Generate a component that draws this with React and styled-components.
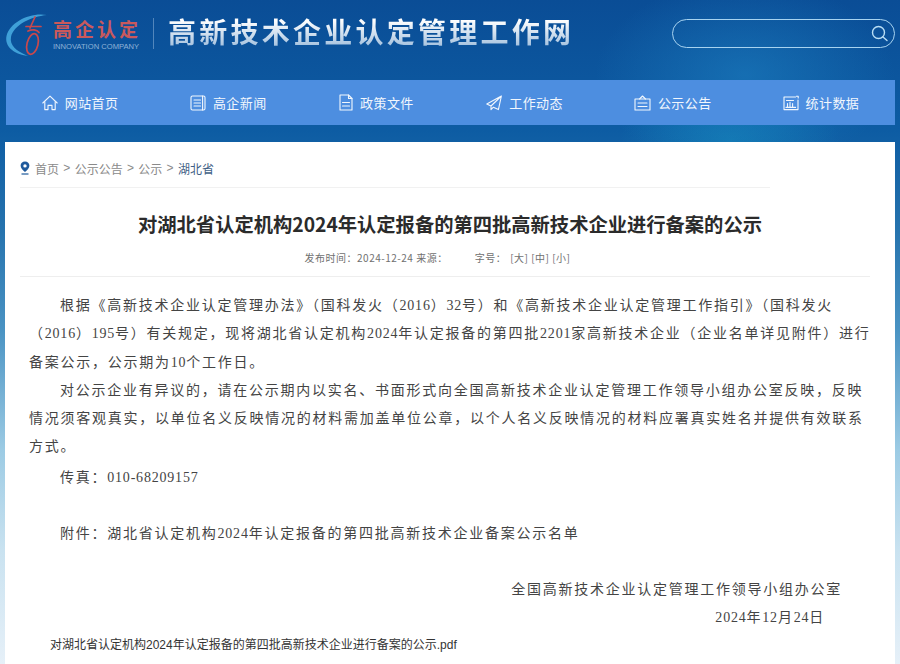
import styled, { createGlobalStyle } from "styled-components";

const GlobalStyle = createGlobalStyle`
  html, body {
    margin: 0;
    padding: 0;
    overflow: hidden;
  }
  * {
    box-sizing: border-box;
  }
`;

const SANS = `"Noto Sans CJK SC", "Liberation Sans", sans-serif`;
const BODY = `"Liberation Serif", "Noto Sans CJK SC", serif`;

const Page = styled.div`
  width: 900px;
  height: 664px;
  overflow: hidden;
  display: flex;
  flex-direction: column;
  font-family: ${SANS};
  background:
    radial-gradient(ellipse 150px 95px at 745px 75px, rgba(30, 130, 195, 0.55), rgba(30, 130, 195, 0) 100%),
    radial-gradient(ellipse 110px 60px at 730px 140px, rgba(20, 140, 190, 0.55), rgba(20, 140, 190, 0) 100%),
    linear-gradient(180deg, #0a4d96 0px, #0d5ca3 130px, #2673ae 230px, #4a93c3 330px, #9ccbe4 450px, #c9e2f0 550px, #e6f0f8 664px);
`;

const Header = styled.header`
  height: 80px;
  flex: none;
  display: flex;
  align-items: flex-start;
  padding: 11px 5px 0 4px;
`;

const Logo = styled.div`
  display: flex;
  align-items: flex-start;
  width: 149px;
  height: 46px;
`;

const LogoText = styled.div`
  display: flex;
  flex-direction: column;
  margin-left: 3px;
  padding-top: 7px;
`;

const LogoName = styled.div`
  font-size: 19px;
  line-height: 22px;
  font-weight: 700;
  letter-spacing: 3px;
  color: #c9595c;
  white-space: nowrap;
`;

const LogoSub = styled.div`
  font-family: "Liberation Sans", sans-serif;
  font-size: 7.6px;
  line-height: 9px;
  margin-top: 2px;
  color: #8fb4d8;
  white-space: nowrap;
`;

const Separator = styled.div`
  width: 1px;
  height: 31px;
  margin: 7px 0 0 0;
  background: rgba(190, 215, 240, 0.4);
`;

const SiteTitle = styled.h1`
  margin: 2px 0 0 14px;
  font-size: 28px;
  line-height: 36px;
  font-weight: 700;
  letter-spacing: 3.25px;
  white-space: nowrap;
  color: transparent;
  background: linear-gradient(180deg, #ffffff 20%, #a8c4e0 90%);
  -webkit-background-clip: text;
  background-clip: text;
`;

const Search = styled.div`
  margin: 8px 0 0 auto;
  width: 223px;
  height: 29px;
  border: 1px solid #a7d3f0;
  border-radius: 15px;
  display: flex;
  align-items: center;
  justify-content: flex-end;
  padding-right: 5px;
  color: #b9def5;
`;

const Nav = styled.nav`
  flex: none;
  height: 45px;
  margin: 0 5px 0 6px;
  display: grid;
  grid-template-columns: repeat(6, 1fr);
  background: #4d8ee0;
`;

const NavItem = styled.a`
  display: flex;
  align-items: center;
  justify-content: center;
  gap: 7px;
  color: #f2f7fd;
  font-size: 13px;
  letter-spacing: 0.4px;
  white-space: nowrap;
`;

const Card = styled.main`
  flex: 1;
  margin: 17px 5px 0 5px;
  background: #ffffff;
  padding: 0 25px 0 15px;
`;

const Crumbs = styled.div`
  height: 46px;
  width: 750px;
  display: flex;
  align-items: center;
  padding-top: 7px;
  border-bottom: 1px solid #f1f1f1;
  font-size: 12px;
  color: #8a8a8a;
`;

const Pin = styled.svg`
  margin-right: 5px;
  color: #1f5a9c;
`;

const CrumbArrow = styled.span`
  margin: 0 4.3px;
  font-family: "Liberation Sans", sans-serif;
`;

const CrumbCurrent = styled.span`
  color: #3f5f86;
`;

const ArticleTitle = styled.h2`
  margin: 0 0 0 -15px;
  height: 63px;
  padding-top: 6px;
  font-size: 19.3px;
  line-height: 60px;
  font-weight: 700;
  color: #2b2b2b;
  text-align: center;
  width: 890px;
  white-space: nowrap;
`;

const Meta = styled.div`
  height: 26px;
  border-bottom: 1px solid #eeeeee;
  display: flex;
  align-items: flex-start;
  justify-content: center;
  padding: 0 15px 0 0;
  font-size: 10px;
  line-height: 14px;
  letter-spacing: 0.5px;
  color: #707070;
  white-space: nowrap;
`;

const MetaGap = styled.span`
  margin-left: ${(p) => p.$gap}px;
`;

const Article = styled.article`
  margin: 15px 0 0 9px;
  width: 842px;
  font-family: ${BODY};
  font-size: 14px;
  letter-spacing: 1.75px;
  line-height: 28.3px;
  color: #444444;
`;

// one printed line of the notice, broken where the source breaks it
const TextLine = styled.div`
  margin-top: ${(p) => p.$top || 0}px;
  padding-left: ${(p) => (p.$indent ? 31 : 0)}px;
  white-space: nowrap;
`;

const Num = styled.span`
  letter-spacing: 0.8px;
`;

const BlankLine = styled.div`
  height: 27.7px;
`;

const Sign = styled.div`
  text-align: right;
  padding-right: ${(p) => p.$right}px;
  white-space: nowrap;
`;

const FileLink = styled.a`
  display: block;
  margin: 0 0 0 21px;
  font-family: "Liberation Sans", "Noto Sans CJK SC", sans-serif;
  font-size: 12px;
  line-height: 27px;
  letter-spacing: 0;
  color: #333333;
  text-decoration: none;
  white-space: nowrap;
`;

const strokeIcon = {
  fill: "none",
  stroke: "currentColor",
  strokeWidth: 1.1,
  strokeLinejoin: "round",
  strokeLinecap: "round",
};

const HomeIcon = () => (
  <svg width="16" height="16" viewBox="0 0 16 16" {...strokeIcon}>
    <path d="M0.8 8 8 1.2 15.2 8" />
    <path d="M2.8 6.8V14.6H6V10.4H10V14.6H13.2V6.8" />
  </svg>
);

const NewsIcon = () => (
  <svg width="16" height="16" viewBox="0 0 16 16" {...strokeIcon}>
    <rect x="1" y="1" width="14" height="14" rx="1.5" />
    <path d="M4 5H10.5M4 8H10.5M4 11H10.5M12.6 1V15" />
  </svg>
);

const FileIcon = () => (
  <svg width="14" height="17" viewBox="0 0 14 17" {...strokeIcon}>
    <path d="M1 1H9.5L13 4.5V16H1Z" />
    <path d="M9.5 1V4.5H13M3.5 8.5H10.5M3.5 12H10.5" />
  </svg>
);

const PlaneIcon = () => (
  <svg width="16" height="16" viewBox="0 0 16 16" {...strokeIcon}>
    <path d="M15.4 1 0.8 9 5 11 15.4 1 12.4 14.6 7.4 12.2 5 14.6V11" />
  </svg>
);

const NoticeIcon = () => (
  <svg width="17" height="16" viewBox="0 0 17 16" {...strokeIcon}>
    <path d="M1 4H16V15H1Z" />
    <path d="M5.5 4 8.5 1 11.5 4M4 8H13M4 11.5H13" />
  </svg>
);

const StatsIcon = () => (
  <svg width="16" height="16" viewBox="0 0 16 16" {...strokeIcon}>
    <path d="M12.5 2H1V14.6H15V5" />
    <path d="M3.5 5.5H10.5M4.5 12.2V8.6M7 12.2V7.2M9.6 12.2V8.6M3 12.4H12.6M13.4 1.2H15.2V3" />
  </svg>
);

const navItems = [
  { label: "网站首页", icon: <HomeIcon /> },
  { label: "高企新闻", icon: <NewsIcon /> },
  { label: "政策文件", icon: <FileIcon /> },
  { label: "工作动态", icon: <PlaneIcon /> },
  { label: "公示公告", icon: <NoticeIcon /> },
  { label: "统计数据", icon: <StatsIcon /> },
];

export default function App() {
  return (
    <Page>
      <GlobalStyle />
      <Header>
        <Logo>
          <svg width="46" height="46" viewBox="0 0 46 46" fill="none">
            <path d="M43 4C26 1 6 11 2.5 25 0.5 35 9 43 24 45 12 40 5.5 34 7 26 9.5 14 27 5.5 43 4Z" fill="#3fa0d8" />
            <ellipse cx="28.5" cy="33" rx="5.5" ry="10.5" transform="rotate(14 28.5 33)" stroke="#c9484c" strokeWidth="1.7" />
            <path d="M22 15.5H37M31 6 26 17M24 20C28 18 33 18.5 35 21.5" stroke="#c9484c" strokeWidth="1.7" strokeLinecap="round" />
          </svg>
          <LogoText>
            <LogoName>高企认定</LogoName>
            <LogoSub>INNOVATION COMPANY</LogoSub>
          </LogoText>
        </Logo>
        <Separator />
        <SiteTitle>高新技术企业认定管理工作网</SiteTitle>
        <Search>
          <svg width="19" height="19" viewBox="0 0 19 19" fill="none" stroke="currentColor" strokeWidth="1.4" strokeLinecap="round">
            <circle cx="8.5" cy="8.5" r="6" />
            <path d="M13 13 17 16.5" />
          </svg>
        </Search>
      </Header>

      <Nav>
        {navItems.map((item) => (
          <NavItem key={item.label}>
            {item.icon}
            {item.label}
          </NavItem>
        ))}
      </Nav>

      <Card>
        <Crumbs>
          <Pin width="10" height="14" viewBox="0 0 10 14" fill="currentColor">
            <path fillRule="evenodd" d="M5 0.5C2.4 0.5 0.6 2.4 0.6 4.8 0.6 7.4 3.2 9.6 5 11 6.8 9.6 9.4 7.4 9.4 4.8 9.4 2.4 7.6 0.5 5 0.5ZM5 3.2A1.7 1.7 0 1 1 5 6.6 1.7 1.7 0 1 1 5 3.2Z" />
            <path d="M1.5 12.4H8.5V13.6H1.5Z" />
          </Pin>
          首页
          <CrumbArrow>&gt;</CrumbArrow>
          公示公告
          <CrumbArrow>&gt;</CrumbArrow>
          公示
          <CrumbArrow>&gt;</CrumbArrow>
          <CrumbCurrent>湖北省</CrumbCurrent>
        </Crumbs>

        <ArticleTitle>对湖北省认定机构2024年认定报备的第四批高新技术企业进行备案的公示</ArticleTitle>

        <Meta>
          发布时间：2024-12-24 来源：
          <MetaGap $gap={27}>字号：</MetaGap>
          <MetaGap $gap={4}>[大] [中] [小]</MetaGap>
        </Meta>

        <Article>
          <TextLine $indent>根据《高新技术企业认定管理办法》（国科发火（<Num>2016</Num>）<Num>32</Num>号）和《高新技术企业认定管理工作指引》（国科发火</TextLine>
          <TextLine>（<Num>2016</Num>）<Num>195</Num>号）有关规定，现将湖北省认定机构<Num>2024</Num>年认定报备的第四批<Num>2201</Num>家高新技术企业（企业名单详见附件）进行</TextLine>
          <TextLine>备案公示，公示期为<Num>10</Num>个工作日。</TextLine>
          <TextLine $indent>对公示企业有异议的，请在公示期内以实名、书面形式向全国高新技术企业认定管理工作领导小组办公室反映，反映</TextLine>
          <TextLine>情况须客观真实，以单位名义反映情况的材料需加盖单位公章，以个人名义反映情况的材料应署真实姓名并提供有效联系</TextLine>
          <TextLine>方式。</TextLine>
          <TextLine $indent $top={2}>传真：<Num>010-68209157</Num></TextLine>
          <BlankLine />
          <TextLine $indent>附件：湖北省认定机构<Num>2024</Num>年认定报备的第四批高新技术企业备案公示名单</TextLine>
          <BlankLine />
          <Sign $right={29}>全国高新技术企业认定管理工作领导小组办公室</Sign>
          <Sign $right={46}><Num>2024</Num>年<Num>12</Num>月<Num>24</Num>日</Sign>
          <FileLink href="#">对湖北省认定机构2024年认定报备的第四批高新技术企业进行备案的公示.pdf</FileLink>
        </Article>
      </Card>
    </Page>
  );
}
